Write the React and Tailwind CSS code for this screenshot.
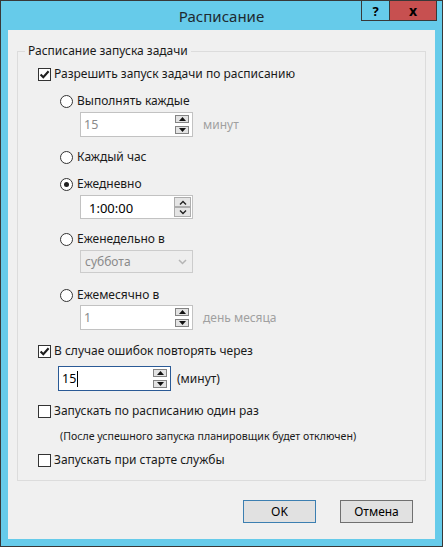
import React from 'react';

const CheckBox = ({ checked }) => (
    <span className="flex h-[13px] w-[13px] shrink-0 items-center justify-center border border-[#333] bg-white">
        {checked && (
            <svg width="11" height="11" viewBox="0 0 11 11">
                <path d="M1.6 5.4 L4.3 8.2 L9.6 2.2" fill="none" stroke="#1f1f1f" strokeWidth="2.1" />
            </svg>
        )}
    </span>
);

const Radio = ({ checked }) => (
    <span className="flex h-[13px] w-[13px] shrink-0 items-center justify-center rounded-full border border-[#333] bg-white">
        {checked && <span className="h-[5px] w-[5px] rounded-full bg-[#1f1f1f]" />}
    </span>
);

const TriButton = ({ up }) => (
    <span className="flex h-[8px] w-[14px] items-center justify-center border border-[#838383] bg-[#e3e3e3]">
        <svg width="7" height="4" viewBox="0 0 7 4">
            <path d={up ? 'M0 4 L3.5 0 L7 4Z' : 'M0 0 L7 0 L3.5 4Z'} fill="#111" />
        </svg>
    </span>
);

const ChevButton = ({ up }) => (
    <span className="flex h-[10px] w-[17px] items-center justify-center border border-[#adadad] bg-[#e5e5e5]">
        <svg width="8" height="5" viewBox="0 0 8 5">
            <path d={up ? 'M1 4.5 L4 1.5 L7 4.5' : 'M1 0.5 L4 3.5 L7 0.5'} fill="none" stroke="#222" strokeWidth="1.4" />
        </svg>
    </span>
);

const SpinBox = ({ value, muted, focused }) => (
    <div className={`flex h-[25px] w-[113px] items-center border bg-white pl-[3px] pr-[3px] ${focused ? 'border-[#2a5a96]' : 'border-[#c2c2c2]'}`}>
        <span className={`flex flex-1 items-center text-[12.5px] ${muted ? 'text-[#8a8a8a]' : 'text-black'}`}>
            {value}
            {focused && <span className="ml-[1px] h-[16px] w-[1px] bg-black" />}
        </span>
        <div className="flex flex-col gap-[3px]">
            <TriButton up />
            <TriButton />
        </div>
    </div>
);

const CheckRow = ({ checked, children, className = '' }) => (
    <div className={`ml-[20px] flex h-[16px] items-center gap-[3px] ${className}`}>
        <CheckBox checked={checked} />
        <span>{children}</span>
    </div>
);

const RadioRow = ({ checked, children, className = '' }) => (
    <div className={`ml-[42px] flex h-[16px] items-center gap-[4px] ${className}`}>
        <Radio checked={checked} />
        <span>{children}</span>
    </div>
);

const App = () => {
    return (
        <div className="relative h-[547px] w-[443px] border border-[#383838] bg-[#66cbea] font-['Noto_Sans',sans-serif] text-[12px] leading-[16px] text-[#1a1a1a]">
            {/* Title bar */}
            <div className="flex h-[29px] items-center justify-center text-[15px] text-[#1e2a30]">
                Расписание
            </div>
            <div className="absolute right-[5px] top-[-1px] flex h-[21px]">
                <div className="flex w-[29px] items-center justify-center border border-[#383838] text-[13px] font-bold text-black">?</div>
                <div className="ml-[-1px] flex w-[48px] items-center justify-center border border-[#383838] bg-[#c75050] text-[14px] font-bold text-black">x</div>
            </div>

            {/* Client area */}
            <div className="ml-[7px] h-[509px] w-[427px] bg-[#f0f0f0] pt-[13px]">
                <fieldset className="ml-[9px] h-[438px] w-[409px] border border-[#dcdcdc]">
                    <legend className="ml-[7px] px-[3px] leading-[16px]">Расписание запуска задачи</legend>

                    <CheckRow checked className="mt-[7px]">Разрешить запуск задачи по расписанию</CheckRow>

                    <RadioRow className="mt-[11px]">Выполнять каждые</RadioRow>
                    <div className="ml-[62px] mt-[3px] flex items-center gap-[10px]">
                        <SpinBox value="15" muted />
                        <span className="text-[#a0a0a0]">минут</span>
                    </div>

                    <RadioRow className="mt-[12px]">Каждый час</RadioRow>

                    <RadioRow checked className="mt-[11px]">Ежедневно</RadioRow>
                    <div className="ml-[62px] mt-[3px] flex h-[24px] w-[113px] border border-[#c2c2c2] bg-white pl-[8px] pr-[1px] pt-[1px]">
                        <span className="flex-1 self-center text-[13px] text-black">1:00:00</span>
                        <div className="flex flex-col">
                            <ChevButton up />
                            <ChevButton />
                        </div>
                    </div>

                    <RadioRow className="mt-[12px]">Еженедельно в</RadioRow>
                    <div className="ml-[62px] mt-[3px] flex h-[23px] w-[113px] items-center border border-[#cccccc] bg-[#eeeeee] pl-[4px] pr-[5px] text-[#8a8a8a]">
                        <span className="flex-1">суббота</span>
                        <svg width="9" height="6" viewBox="0 0 9 6">
                            <path d="M1 1 L4.5 4.5 L8 1" fill="none" stroke="#b5b5b5" strokeWidth="1.5" />
                        </svg>
                    </div>

                    <RadioRow className="mt-[14px]">Ежемесячно в</RadioRow>
                    <div className="ml-[62px] mt-[2px] flex items-center gap-[10px]">
                        <SpinBox value="1" muted />
                        <span className="text-[#a0a0a0]">день месяца</span>
                    </div>

                    <CheckRow checked className="mt-[13px]">В случае ошибок повторять через</CheckRow>
                    <div className="ml-[40px] mt-[7px] flex items-center gap-[6px]">
                        <SpinBox value="15" focused />
                        <span>(минут)</span>
                    </div>

                    <CheckRow className="mt-[12px]">Запускать по расписанию один раз</CheckRow>
                    <div className="ml-[42px] mt-[9px] h-[16px] text-[10.6px]">(После успешного запуска планировщик будет отключен)</div>
                    <CheckRow className="mt-[8px]">Запускать при старте службы</CheckRow>
                </fieldset>

                <div className="mt-[19px] flex justify-end gap-[24px] pr-[22px]">
                    <button className="h-[23px] w-[73px] border border-[#3c7fb1] bg-[#e1e1e1] text-[12px] text-black">OK</button>
                    <button className="h-[23px] w-[73px] border border-[#707070] bg-[#e1e1e1] text-[12px] text-black">Отмена</button>
                </div>
            </div>
        </div>
    );
};

export default App;
